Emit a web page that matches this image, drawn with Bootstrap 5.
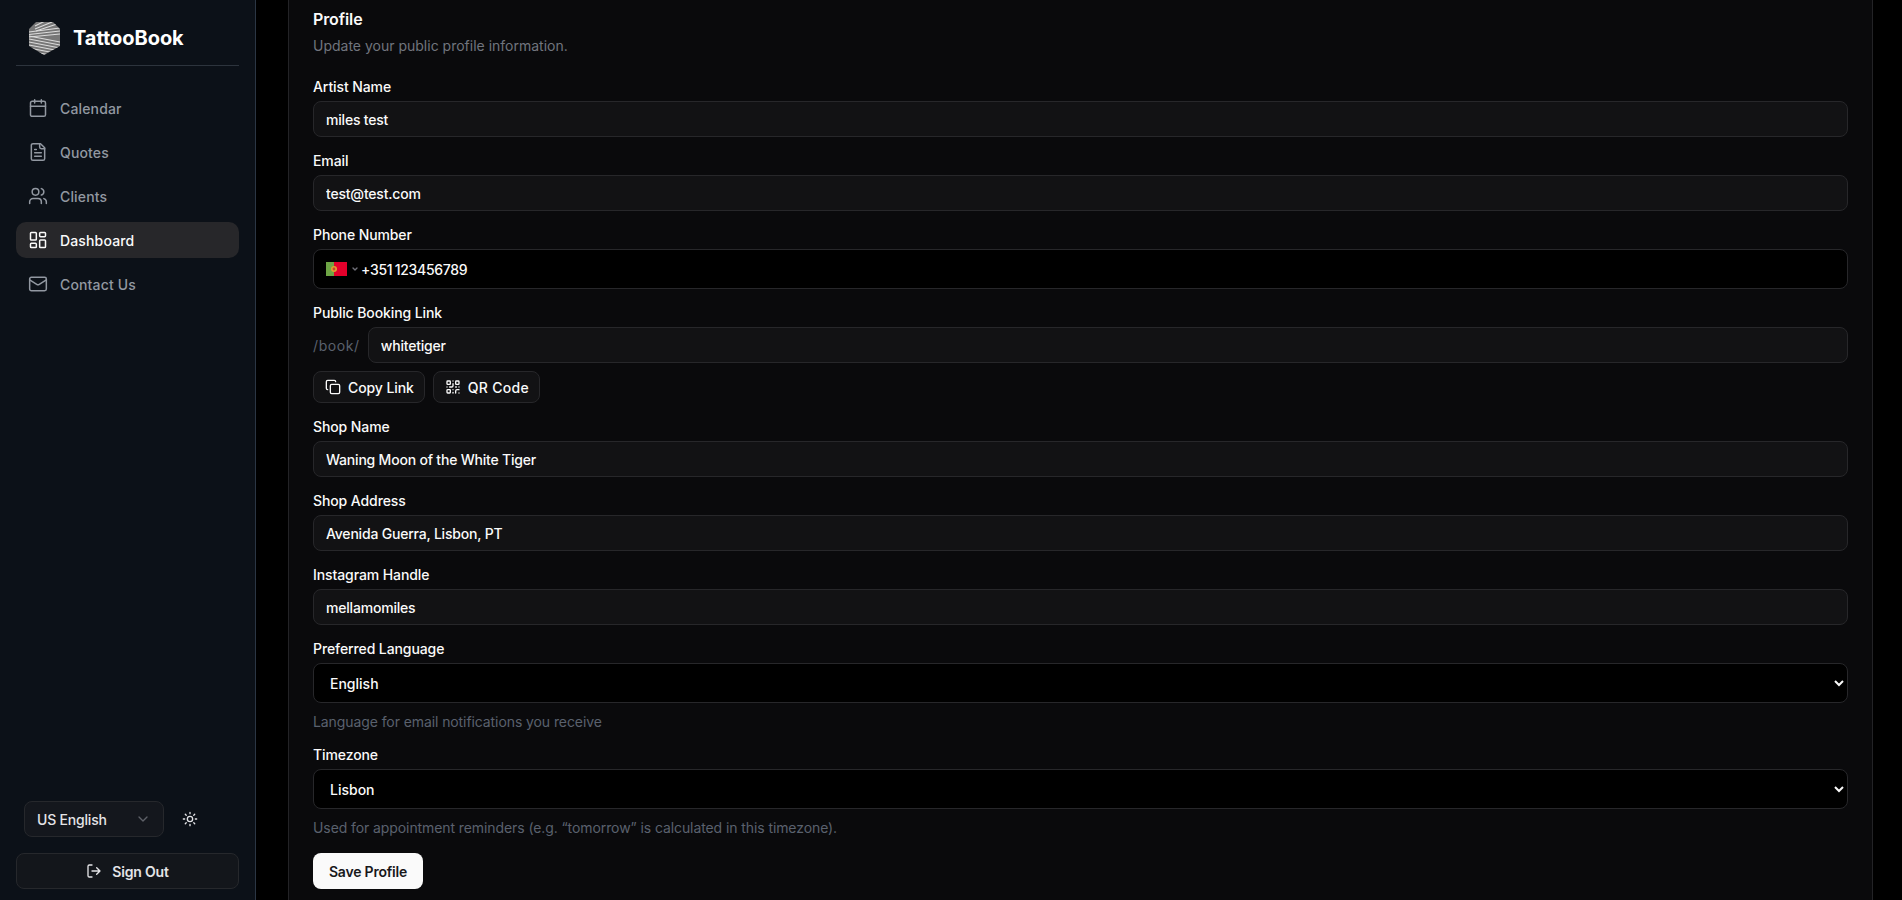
<!DOCTYPE html>
<html lang="en">
<head>
    <meta charset="UTF-8">
    <meta name="viewport" content="width=device-width, initial-scale=1.0">
    <title>TattooBook - Profile</title>
    <link href="https://cdn.jsdelivr.net/npm/bootstrap@5.3.0/dist/css/bootstrap.min.css" rel="stylesheet">
    <style>
        html, body { height: 100%; }
        body {
            font-family: "Inter", "Liberation Sans", sans-serif;
            background: #000;
            color: #fafafa;
            font-size: 14px;
            overflow: hidden;
            color-scheme: dark;
        }
        .app-shell { height: 100vh; }

        /* sidebar */
        .side-panel {
            width: 256px;
            flex: 0 0 256px;
            background: #0c1118;
            border-right: 1px solid #2b3644;
            padding: 0 16px 11px;
        }
        .brand-row {
            height: 66px;
            padding: 10px 13px 0 13px;
            border-bottom: 1px solid #2d343d;
            gap: 13px;
            margin-bottom: 24px;
        }
        .brand-name { font-size: 20px; font-weight: 700; color: #fff; letter-spacing: -.05px; }
        .side-link {
            height: 36px;
            margin-bottom: 8px;
            padding: 0 12px;
            gap: 12px;
            color: #9298a1;
            border-radius: 10px;
            text-decoration: none;
            font-size: 14px;
            font-weight: 500;
            letter-spacing: .15px;
        }
        .side-link.is-active { background: #27272a; color: #fafafa; }
        .side-link svg { width: 20px; height: 20px; flex: none; }
        .lang-pick {
            width: 140px;
            height: 36px;
            margin-left: 8px;
            padding: 0 12px;
            background: #14171d;
            border: 1px solid #26282c;
            border-radius: 8px;
            color: #e4e4e7;
            font-size: 14px;
            font-weight: 500;
            letter-spacing: -.2px;
        }
        .sun-btn { background: none; border: 0; padding: 0; margin-left: 18px; color: #e4e4e7; line-height: 0; }
        .sign-out {
            height: 36px;
            margin-top: 16px;
            gap: 10px;
            background: #13161b;
            border: 1px solid #26282c;
            border-radius: 8px;
            color: #e4e4e7;
            font-size: 14px;
            font-weight: 600;
            letter-spacing: -.2px;
        }

        /* main */
        .main-area { padding: 0 29px 0 32px; overflow: hidden; }
        .profile-card {
            background: #0a0a0c;
            border: 1px solid #232326;
            border-top: 0;
            border-radius: 0;
            padding: 7px 24px 40px;
            color: #fafafa;
        }
        .card-heading { font-size: 16px; line-height: 24px; font-weight: 600; margin: 0 0 5px; letter-spacing: -.1px; }
        .card-sub { font-size: 14px; line-height: 20px; color: #71757e; margin: 0 0 21px; letter-spacing: 0; }
        .field { margin-bottom: 14px; }
        .field-label { display: block; font-size: 14px; line-height: 20px; font-weight: 500; margin-bottom: 4px; letter-spacing: -.1px; }
        .dark-input.form-control {
            height: 36px;
            padding: 0 12px;
            background: #121214;
            border: 1px solid #27272a;
            border-radius: 8px;
            color: #fafafa;
            font-size: 14px;
            font-weight: 500;
            letter-spacing: -.2px;
            box-shadow: none;
        }
        .phone-box {
            height: 40px;
            padding: 0 12px;
            background: #000;
            border: 1px solid #27272a;
            border-radius: 8px;
            font-size: 14px;
            font-weight: 500;
        }
        .flag-mini { width: 21px; height: 14px; display: block; flex: none; }
        .phone-caret { width: 8px; height: 8px; color: #71717a; margin: 0 2px 0 4px; flex: none; }
        .phone-num { width: 100%; background: none; border: 0; outline: 0; color: #fafafa; padding: 0; font-size: 14px; font-weight: 500; letter-spacing: -.3px; word-spacing: -1px; }
        .book-prefix { color: #5a616e; font-size: 14px; margin-right: 8px; letter-spacing: .6px; }
        .tool-btn {
            height: 32px;
            padding: 0 10px 0 11px;
            gap: 7px;
            background: #121214;
            border: 1px solid #27272a;
            border-radius: 8px;
            color: #fafafa;
            font-size: 14px;
            font-weight: 500;
            letter-spacing: -.1px;
        }
        .tool-btn.tool-wide { letter-spacing: .3px; }
        .tool-btn svg { width: 16px; height: 16px; }
        .dark-select {
            appearance: auto;
            -webkit-appearance: auto;
            width: 100%;
            height: 40px;
            padding: 0 12px;
            background: #000;
            border: 1px solid #27272a;
            border-radius: 8px;
            color: #fafafa;
            font-size: 14px;
            font-weight: 500;
            color-scheme: dark;
        }
        .field-hint { font-size: 14px; line-height: 20px; color: #5a616e; margin: 9px 0 -1px; letter-spacing: -.09px; }
        .save-btn {
            height: 36px;
            width: 110px;
            padding: 0;
            margin-top: 2px;
            background: #fafafa;
            border: 0;
            border-radius: 8px;
            color: #18181b;
            font-size: 14px;
            font-weight: 600;
            letter-spacing: -.2px;
        }
    </style>
</head>
<body>
<div class="app-shell d-flex">
    <aside class="side-panel d-flex flex-column">
        <div class="brand-row d-flex align-items-center">
            <svg width="31" height="34" viewBox="0 0 31 34">
                <defs>
                    <clipPath id="logoClip"><path d="M7 1 24 1 31 8 31 25 15 34 0 25 0 8Z"/></clipPath>
                </defs>
                <g clip-path="url(#logoClip)">
                    <rect width="31" height="34" fill="#777"/>
                    <g stroke="#dcdcdc" stroke-width="1.1">
                        <path d="M6 5 16 0M6 8 23 1M7 10 28 3"/>
                        <path d="M0 11 31 7M0 13.500 31 10M0 16 31 13"/>
                        <path d="M0 15 31 21M0 18 31 24M0 21 31 27M0 24 31 30M0 27 31 33M0 30 31 36"/>
                    </g>
                </g>
            </svg>
            <span class="brand-name">TattooBook</span>
        </div>

        <nav class="d-flex flex-column">
            <a class="side-link d-flex align-items-center" href="#">
                <svg viewBox="0 0 24 24" fill="none" stroke="currentColor" stroke-width="1.8" stroke-linecap="round" stroke-linejoin="round"><path d="M8 2v4M16 2v4"/><rect x="3" y="4" width="18" height="18" rx="2"/><path d="M3 10h18"/></svg>
                Calendar
            </a>
            <a class="side-link d-flex align-items-center" href="#">
                <svg viewBox="0 0 24 24" fill="none" stroke="currentColor" stroke-width="1.8" stroke-linecap="round" stroke-linejoin="round"><path d="M15 2H6a2 2 0 0 0-2 2v16a2 2 0 0 0 2 2h12a2 2 0 0 0 2-2V7Z"/><path d="M14 2v4a2 2 0 0 0 2 2h4"/><path d="M10 9H8M16 13H8M16 17H8"/></svg>
                Quotes
            </a>
            <a class="side-link d-flex align-items-center" href="#">
                <svg viewBox="0 0 24 24" fill="none" stroke="currentColor" stroke-width="1.8" stroke-linecap="round" stroke-linejoin="round"><path d="M16 21v-2a4 4 0 0 0-4-4H6a4 4 0 0 0-4 4v2"/><circle cx="9" cy="7" r="4"/><path d="M22 21v-2a4 4 0 0 0-3-3.870M16 3.130a4 4 0 0 1 0 7.750"/></svg>
                Clients
            </a>
            <a class="side-link is-active d-flex align-items-center" href="#">
                <svg viewBox="0 0 24 24" fill="none" stroke="currentColor" stroke-width="1.8" stroke-linecap="round" stroke-linejoin="round"><rect x="3" y="3" width="7" height="9" rx="1"/><rect x="14" y="3" width="7" height="5" rx="1"/><rect x="14" y="12" width="7" height="9" rx="1"/><rect x="3" y="16" width="7" height="5" rx="1"/></svg>
                Dashboard
            </a>
            <a class="side-link d-flex align-items-center" href="#">
                <svg viewBox="0 0 24 24" fill="none" stroke="currentColor" stroke-width="1.8" stroke-linecap="round" stroke-linejoin="round"><rect x="2" y="4" width="20" height="16" rx="2"/><path d="m22 7-8.970 5.700a1.940 1.940 0 0 1-2.060 0L2 7"/></svg>
                Contact Us
            </a>
        </nav>

        <div class="mt-auto">
            <div class="d-flex align-items-center">
                <button type="button" class="lang-pick d-flex align-items-center justify-content-between">
                    US English
                    <svg width="16" height="16" viewBox="0 0 24 24" fill="none" stroke="#5e6168" stroke-width="2" stroke-linecap="round" stroke-linejoin="round"><path d="m6 9 6 6 6-6"/></svg>
                </button>
                <button type="button" class="sun-btn" aria-label="Theme">
                    <svg width="16" height="16" viewBox="0 0 24 24" fill="none" stroke="currentColor" stroke-width="2" stroke-linecap="round" stroke-linejoin="round"><circle cx="12" cy="12" r="4"/><path d="M12 2v2M12 20v2M4.930 4.930l1.410 1.410M17.660 17.660l1.410 1.410M2 12h2M20 12h2M6.340 17.660l-1.410 1.410M19.070 4.930l-1.410 1.410"/></svg>
                </button>
            </div>
            <button type="button" class="sign-out w-100 d-flex align-items-center justify-content-center">
                <svg width="16" height="16" viewBox="0 0 24 24" fill="none" stroke="currentColor" stroke-width="2" stroke-linecap="round" stroke-linejoin="round"><path d="M9 21H5a2 2 0 0 1-2-2V5a2 2 0 0 1 2-2h4"/><path d="m16 17 5-5-5-5M21 12H9"/></svg>
                Sign Out
            </button>
        </div>
    </aside>

    <main class="main-area flex-grow-1">
        <form class="card profile-card">
            <h2 class="card-heading">Profile</h2>
            <p class="card-sub">Update your public profile information.</p>

            <div class="field">
                <label class="field-label" for="artistName">Artist Name</label>
                <input id="artistName" class="form-control dark-input" value="miles test">
            </div>
            <div class="field">
                <label class="field-label" for="email">Email</label>
                <input id="email" class="form-control dark-input" value="test@test.com">
            </div>
            <div class="field">
                <label class="field-label" for="phone">Phone Number</label>
                <div class="phone-box d-flex align-items-center">
                    <svg class="flag-mini" viewBox="0 0 21 14"><rect width="21" height="14" fill="#e4002b"/><rect width="8" height="14" fill="#6ea545"/><circle cx="8" cy="7" r="3" fill="#e0a030"/><circle cx="8" cy="7" r="1.400" fill="#c8452c"/></svg>
                    <svg class="phone-caret" viewBox="0 0 24 24" fill="none" stroke="currentColor" stroke-width="4" stroke-linecap="round" stroke-linejoin="round"><path d="m6 9 6 6 6-6"/></svg>
                    <input id="phone" class="phone-num" value="+351 123456789">
                </div>
            </div>
            <div class="field">
                <label class="field-label" for="bookLink">Public Booking Link</label>
                <div class="d-flex align-items-center">
                    <span class="book-prefix">/book/</span>
                    <input id="bookLink" class="form-control dark-input" value="whitetiger">
                </div>
                <div class="d-flex gap-2 mt-2">
                    <button type="button" class="tool-btn d-flex align-items-center">
                        <svg viewBox="0 0 24 24" fill="none" stroke="currentColor" stroke-width="2" stroke-linecap="round" stroke-linejoin="round"><rect x="8" y="8" width="14" height="14" rx="2"/><path d="M4 16c-1.100 0-2-.9-2-2V4c0-1.100.9-2 2-2h10c1.100 0 2 .9 2 2"/></svg>
                        Copy Link
                    </button>
                    <button type="button" class="tool-btn tool-wide d-flex align-items-center">
                        <svg viewBox="0 0 24 24" fill="none" stroke="currentColor" stroke-width="2" stroke-linecap="round" stroke-linejoin="round"><rect x="3" y="3" width="5" height="5" rx="1"/><rect x="16" y="3" width="5" height="5" rx="1"/><rect x="3" y="16" width="5" height="5" rx="1"/><path d="M21 16h-3a2 2 0 0 0-2 2v3M21 21v.01M12 7v3a2 2 0 0 1-2 2H7M3 12h.01M12 3h.01M12 16v.01M16 12h1M21 12v.01M12 21v-1"/></svg>
                        QR Code
                    </button>
                </div>
            </div>
            <div class="field">
                <label class="field-label" for="shopName">Shop Name</label>
                <input id="shopName" class="form-control dark-input" value="Waning Moon of the White Tiger">
            </div>
            <div class="field">
                <label class="field-label" for="shopAddress">Shop Address</label>
                <input id="shopAddress" class="form-control dark-input" value="Avenida Guerra, Lisbon, PT">
            </div>
            <div class="field">
                <label class="field-label" for="instagram">Instagram Handle</label>
                <input id="instagram" class="form-control dark-input" value="mellamomiles">
            </div>
            <div class="field">
                <label class="field-label" for="language">Preferred Language</label>
                <select id="language" class="dark-select"><option>English</option></select>
                <p class="field-hint">Language for email notifications you receive</p>
            </div>
            <div class="field">
                <label class="field-label" for="timezone">Timezone</label>
                <select id="timezone" class="dark-select"><option>Lisbon</option></select>
                <p class="field-hint">Used for appointment reminders (e.g. “tomorrow” is calculated in this timezone).</p>
            </div>
            <div>
                <button type="button" class="save-btn">Save Profile</button>
            </div>
        </form>
    </main>
</div>
<script src="https://cdn.jsdelivr.net/npm/bootstrap@5.3.0/dist/js/bootstrap.bundle.min.js"></script>
</body>
</html>
